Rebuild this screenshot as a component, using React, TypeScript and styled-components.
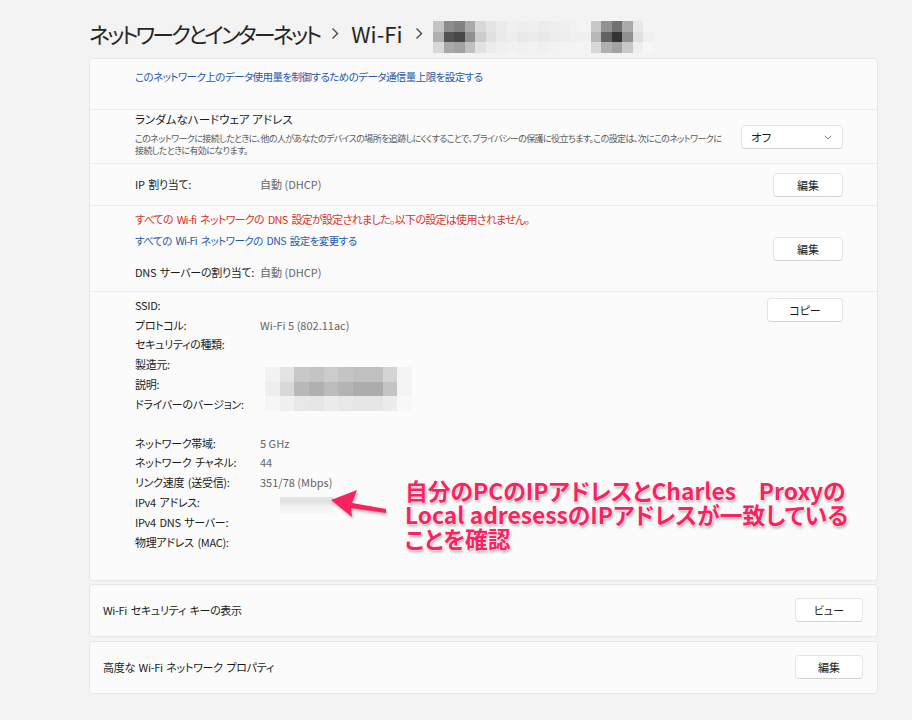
import React from 'react'
import styled, { createGlobalStyle } from 'styled-components'

const GlobalStyle = createGlobalStyle`
    html, body {
        margin: 0;
        padding: 0;
        background: #f3f3f3;
    }

    body {
        font-family: "Noto Sans CJK JP", "Noto Sans", sans-serif;
        font-feature-settings: "palt";
        color: #1b1b1b;
    }
`

const Page = styled.div`
    position: relative;
    width: 912px;
    height: 720px;
    box-sizing: border-box;
    padding: 14px 34px 0 89px;
    overflow: hidden;
`

const Heading = styled.h1`
    display: flex;
    align-items: center;
    gap: 12px;
    height: 38px;
    margin: 0 0 6px;
    font-size: 22px;
    font-weight: 400;
    color: #262626;
`

const Crumb = styled.span<{ $tight?: boolean }>`
    white-space: nowrap;
    letter-spacing: ${(p) => (p.$tight ? '-2.9px' : '0')};
`

const Card = styled.div`
    background: #fbfbfb;
    border: 1px solid #e6e6e6;
    border-radius: 4px;
    margin-bottom: 3px;
`

const Section = styled.div<{ $h?: number; $align?: string; $top?: number }>`
    display: flex;
    align-items: ${(p) => p.$align || 'center'};
    justify-content: space-between;
    box-sizing: border-box;
    min-height: ${(p) => (p.$h ? `${p.$h}px` : 'auto')};
    padding: ${(p) => p.$top || 0}px 34px 0 45px;
    border-top: 1px solid #ececec;

    &:first-of-type {
        border-top: none;
    }
`

const LinkText = styled.div<{ $top?: number }>`
    font-size: 10.5px;
    line-height: 16px;
    letter-spacing: -0.55px;
    word-spacing: 2px;
    color: #2359ad;
    margin-top: ${(p) => p.$top || 0}px;
`

const Warning = styled.div`
    font-size: 11px;
    line-height: 16px;
    letter-spacing: -0.7px;
    word-spacing: 2px;
    color: #d8332c;
`

const Title = styled.div`
    font-size: 11.5px;
    line-height: 16px;
    margin-bottom: 6px;
`

const Desc = styled.div`
    font-size: 9px;
    line-height: 12px;
    letter-spacing: -0.6px;
    color: #5a5a5a;
    white-space: nowrap;
`

const Column = styled.div`
    display: flex;
    flex-direction: column;
`

const PropList = styled(Column)`
    padding: 3px 0 28px;
`

const PropRow = styled.div<{ $gap?: number }>`
    display: flex;
    align-items: center;
    height: 19.8px;
    margin-top: ${(p) => p.$gap || 0}px;
    font-size: 11px;
`

const Label = styled.span`
    width: 125px;
    flex-shrink: 0;
    letter-spacing: -0.3px;
    word-spacing: 1.5px;
    color: #1b1b1b;
`

const Value = styled.span`
    color: #656565;
`

const Button = styled.button<{ $w?: number; $top?: number }>`
    width: ${(p) => p.$w || 70}px;
    height: 24px;
    flex-shrink: 0;
    align-self: ${(p) => (p.$top !== undefined ? 'flex-start' : 'center')};
    margin-top: ${(p) => p.$top || 0}px;
    background: #ffffff;
    border: 1px solid #e5e5e5;
    border-bottom-color: #d4d4d4;
    border-radius: 4px;
    font-family: inherit;
    font-feature-settings: "palt";
    font-size: 11px;
    color: #1b1b1b;
    padding: 0;
`

const Dropdown = styled.div`
    display: flex;
    align-items: center;
    justify-content: space-between;
    align-self: center;
    box-sizing: border-box;
    width: 102px;
    height: 24px;
    padding: 0 10px 0 9px;
    background: #ffffff;
    border: 1px solid #e5e5e5;
    border-bottom-color: #d4d4d4;
    border-radius: 4px;
    font-size: 11.5px;
    flex-shrink: 0;
`

const SmallCard = styled(Card)`
    display: flex;
    align-items: center;
    justify-content: space-between;
    height: 53px;
    box-sizing: border-box;
    padding: 0 14px 0 13px;
    font-size: 11px;
    letter-spacing: -0.3px;
    word-spacing: 1.5px;
    margin-bottom: 4px;
`

const Pixels = styled.div<{ $cols: number; $cell: number; $rows: number }>`
    display: grid;
    grid-template-columns: repeat(${(p) => p.$cols}, ${(p) => p.$cell}px);
    grid-template-rows: repeat(${(p) => p.$rows}, ${(p) => p.$cell}px);
`

const BlurBox = styled.div`
    position: absolute;
`

const AddrBlur = styled.div`
    position: absolute;
    left: 280px;
    top: 497px;
    width: 54px;
    height: 16px;
    background: linear-gradient(to bottom, #e2e2e2 0%, #dcdcdc 30%, #f2f2f2 60%, #f6f6f6 100%);
    opacity: 0.9;
`

const Note = styled.div`
    position: absolute;
    left: 405px;
    top: 479px;
    font-size: 22.8px;
    line-height: 24px;
    font-weight: 700;
    color: #fa2260;
    white-space: nowrap;
    text-shadow: 0 0 2px #fff, 0 0 2px #fff, 1px 2px 3px rgba(0, 0, 0, 0.35);
`

const Arrow = styled.svg`
    position: absolute;
    left: 325px;
    top: 485px;
    filter: drop-shadow(1px 2px 1.5px rgba(0, 0, 0, 0.3));
`

const headerGrid = [
    'c4 8c 82 aa d8 e4 ec f0 ee f0 ec ee f0 f2 f4 c8 92 72 aa e8 f4',
    'b0 52 48 90 cc e0 ea ee e8 ec e8 ec ee f0 f0 b8 62 34 90 e0 f0',
    'd8 a8 a2 c0 e2 ec f0 f2 f0 f2 f0 f2 f4 f4 f4 d8 b0 a2 c8 ee f6',
]

const descGrid = [
    'f2 e4 c8 c4 cc c4 c0 c0 d4 f4',
    'ee d8 b8 b0 bc b4 ac ac c4 f4',
    'f6 f0 e8 e6 ec e8 e6 e6 ec f8',
]

const PixelBlock: React.FC<{ rows: string[]; cell: number }> = ({ rows, cell }) => {
    const cells = rows.map((r) => r.split(' '))
    return (
        <Pixels $cols={cells[0].length} $rows={cells.length} $cell={cell}>
            {cells.flat().map((c, i) => (
                <div key={i} style={{ background: `#${c}${c}${c}` }} />
            ))}
        </Pixels>
    )
}

const Chevron = () => (
    <svg width="8" height="13" viewBox="0 0 8 13">
        <path d="M1.5 1.5 L6.5 6.5 L1.5 11.5" fill="none" stroke="#4a4a4a" strokeWidth="1.4" />
    </svg>
)

const props1 = [
    ['SSID:', ''],
    ['プロトコル:', 'Wi-Fi 5 (802.11ac)'],
    ['セキュリティの種類:', ''],
    ['製造元:', ''],
    ['説明:', ''],
    ['ドライバーのバージョン:', ''],
]

const props2 = [
    ['ネットワーク帯域:', '5 GHz'],
    ['ネットワーク チャネル:', '44'],
    ['リンク速度 (送受信):', '351/78 (Mbps)'],
    ['IPv4 アドレス:', ''],
    ['IPv4 DNS サーバー:', ''],
    ['物理アドレス (MAC):', ''],
]

const App: React.FC = () => {
    return (
        <Page>
            <GlobalStyle />
            <Heading>
                <Crumb $tight>ネットワークとインターネット</Crumb>
                <Chevron />
                <Crumb>Wi-Fi</Crumb>
                <Chevron />
            </Heading>

            <BlurBox style={{ left: 433, top: 21 }}>
                <PixelBlock rows={headerGrid} cell={10.5} />
            </BlurBox>

            <Card>
                <Section $h={50} $align="flex-start">
                    <LinkText $top={10}>このネットワーク上のデータ使用量を制御するためのデータ通信量上限を設定する</LinkText>
                </Section>

                <Section $h={54} $align="flex-start" $top={1}>
                    <Column>
                        <Title>ランダムなハードウェア アドレス</Title>
                        <Desc>
                            このネットワークに接続したときに、他の人があなたのデバイスの場所を追跡しにくくすることで、プライバシーの保護に役立ちます。この設定は、次にこのネットワークに
                            <br />
                            接続したときに有効になります。
                        </Desc>
                    </Column>
                    <Dropdown>
                        <span>オフ</span>
                        <svg width="8" height="5" viewBox="0 0 8 5">
                            <path d="M0.8 0.8 L4 4 L7.2 0.8" fill="none" stroke="#7a7a7a" strokeWidth="1" />
                        </svg>
                    </Dropdown>
                </Section>

                <Section $h={42}>
                    <PropRow>
                        <Label>IP 割り当て:</Label>
                        <Value>自動 (DHCP)</Value>
                    </PropRow>
                    <Button>編集</Button>
                </Section>

                <Section $h={86} $align="flex-start" $top={5}>
                    <Column>
                        <Warning>すべての Wi-fi ネットワークの DNS 設定が設定されました。以下の設定は使用されません。</Warning>
                        <LinkText $top={6}>すべての Wi-Fi ネットワークの DNS 設定を変更する</LinkText>
                        <PropRow $gap={13}>
                            <Label>DNS サーバーの割り当て:</Label>
                            <Value>自動 (DHCP)</Value>
                        </PropRow>
                    </Column>
                    <Button $top={26}>編集</Button>
                </Section>

                <Section $align="flex-start">
                    <PropList>
                        {props1.map(([k, v]) => (
                            <PropRow key={k}>
                                <Label>{k}</Label>
                                <Value>{v}</Value>
                            </PropRow>
                        ))}
                        {props2.map(([k, v], i) => (
                            <PropRow key={k} $gap={i === 0 ? 19 : 0}>
                                <Label>{k}</Label>
                                <Value>{v}</Value>
                            </PropRow>
                        ))}
                    </PropList>
                    <Button $w={76} $top={6}>コピー</Button>
                </Section>
            </Card>

            <SmallCard>
                <span>Wi-Fi セキュリティ キーの表示</span>
                <Button $w={68}>ビュー</Button>
            </SmallCard>

            <SmallCard>
                <span>高度な Wi-Fi ネットワーク プロパティ</span>
                <Button $w={68}>編集</Button>
            </SmallCard>

            <BlurBox style={{ left: 265, top: 367 }}>
                <PixelBlock rows={descGrid} cell={14.7} />
            </BlurBox>
            <AddrBlur />

            <Arrow width="70" height="40" viewBox="0 0 70 40">
                <polygon points="6,15 32,5 27,18 61,24 61,28 26,23 27,32" fill="#fa2260" />
            </Arrow>

            <Note>
                自分のPCのIPアドレスとCharles　Proxyの
                <br />
                Local adresessのIPアドレスが一致している
                <br />
                ことを確認
            </Note>
        </Page>
    )
}

export default App
